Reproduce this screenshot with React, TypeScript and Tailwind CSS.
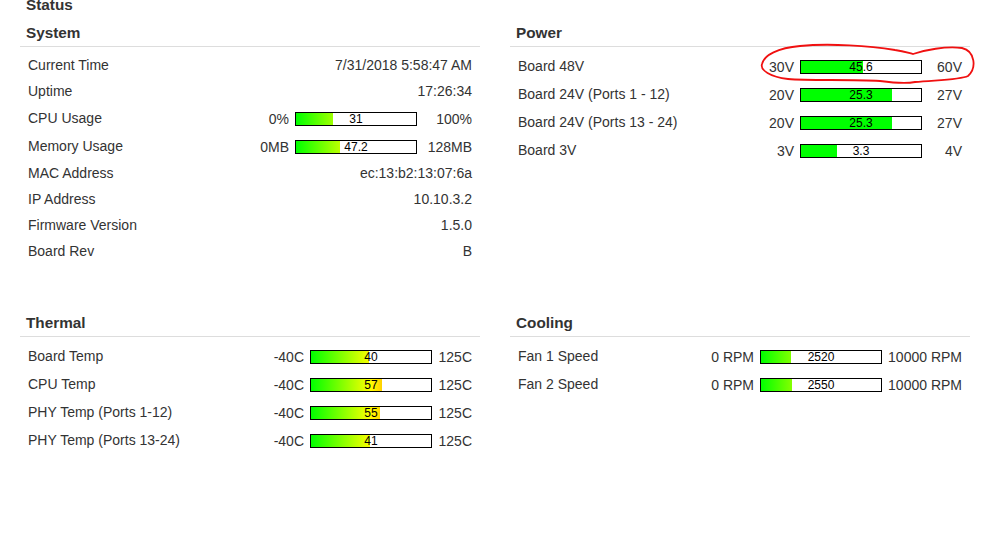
import React from "react";

type Row =
  | { kind: "text"; label: string; value: string }
  | {
      kind: "bar";
      label: string;
      min: string;
      max: string;
      value: string;
      pct: number;
      solid?: boolean;
    };

const GRAD =
  "bg-[linear-gradient(to_right,#00ff00,#ffff00_50%,#ff0000)] bg-[length:120px_100%] bg-no-repeat";

function Bar({ pct, value, solid }: { pct: number; value: string; solid?: boolean }) {
  return (
    <div className="relative ml-[6px] h-[14px] w-[122px] border border-black bg-white">
      <div
        className={`absolute left-0 top-0 h-full ${solid ? "bg-[#00ff00]" : GRAD}`}
        style={{ width: `${pct}%` }}
      />
      <div className="absolute inset-0 flex items-center justify-center text-[12px] leading-[12px] text-black">
        {value}
      </div>
    </div>
  );
}

function Section({
  title,
  rows,
  maxW,
}: {
  title: string;
  rows: Row[];
  maxW: string;
}) {
  return (
    <div>
      <div className="mt-[9px] border-b border-[#dddddd] pb-[3px] pl-[6px] text-[15.3px] font-bold leading-[20px] text-[#333333]">
        {title}
      </div>
      <div className="pt-[5px]">
        {rows.map((r, i) =>
          r.kind === "text" ? (
            <div
              key={i}
              className="flex h-[26px] items-center justify-between px-[8px] text-[14px] leading-[16px] text-[#333333]"
            >
              <span>{r.label}</span>
              <span>{r.value}</span>
            </div>
          ) : (
            <div
              key={i}
              className="flex h-[28px] items-center justify-between px-[8px] text-[14px] leading-[16px] text-[#333333]"
            >
              <span className="-mt-[1px]">{r.label}</span>
              <div className="mt-[2px] flex items-center">
                <span>{r.min}</span>
                <Bar pct={r.pct} value={r.value} solid={r.solid} />
                <span className={`${maxW} text-right`}>{r.max}</span>
              </div>
            </div>
          )
        )}
      </div>
    </div>
  );
}

const system: Row[] = [
  { kind: "text", label: "Current Time", value: "7/31/2018 5:58:47 AM" },
  { kind: "text", label: "Uptime", value: "17:26:34" },
  { kind: "bar", label: "CPU Usage", min: "0%", max: "100%", value: "31", pct: 31 },
  { kind: "bar", label: "Memory Usage", min: "0MB", max: "128MB", value: "47.2", pct: (47.2 / 128) * 100 },
  { kind: "text", label: "MAC Address", value: "ec:13:b2:13:07:6a" },
  { kind: "text", label: "IP Address", value: "10.10.3.2" },
  { kind: "text", label: "Firmware Version", value: "1.5.0" },
  { kind: "text", label: "Board Rev", value: "B" },
];

const power: Row[] = [
  { kind: "bar", label: "Board 48V", min: "30V", max: "60V", value: "45.6", pct: 52, solid: true },
  { kind: "bar", label: "Board 24V (Ports 1 - 12)", min: "20V", max: "27V", value: "25.3", pct: (5.3 / 7) * 100, solid: true },
  { kind: "bar", label: "Board 24V (Ports 13 - 24)", min: "20V", max: "27V", value: "25.3", pct: (5.3 / 7) * 100, solid: true },
  { kind: "bar", label: "Board 3V", min: "3V", max: "4V", value: "3.3", pct: 30, solid: true },
];

const t = (v: number) => ((v + 40) / 165) * 100;
const thermal: Row[] = [
  { kind: "bar", label: "Board Temp", min: "-40C", max: "125C", value: "40", pct: t(40) },
  { kind: "bar", label: "CPU Temp", min: "-40C", max: "125C", value: "57", pct: t(57) },
  { kind: "bar", label: "PHY Temp (Ports 1-12)", min: "-40C", max: "125C", value: "55", pct: t(55) },
  { kind: "bar", label: "PHY Temp (Ports 13-24)", min: "-40C", max: "125C", value: "41", pct: t(41) },
];

const cooling: Row[] = [
  { kind: "bar", label: "Fan 1 Speed", min: "0 RPM", max: "10000 RPM", value: "2520", pct: 25.2 },
  { kind: "bar", label: "Fan 2 Speed", min: "0 RPM", max: "10000 RPM", value: "2550", pct: 25.5 },
];

export default function App() {
  return (
    <div
      className="relative h-[540px] w-[987px] overflow-hidden bg-white"
      style={{ fontFamily: '"Liberation Sans", Arial, sans-serif' }}
    >
      <div className="-mt-[4px] pl-[26px] text-[15.3px] font-bold leading-[18px] text-[#333333]">
        Status
      </div>
      <div className="grid grid-cols-[460px_460px] gap-x-[30px] gap-y-[40px] pl-[20px]">
        <Section title="System" rows={system} maxW="w-[55px]" />
        <Section title="Power" rows={power} maxW="w-[40px]" />
        <Section title="Thermal" rows={thermal} maxW="w-[40px]" />
        <Section title="Cooling" rows={cooling} maxW="w-[80px]" />
      </div>
      <svg
        className="pointer-events-none absolute left-0 top-0"
        width="987"
        height="540"
        viewBox="0 0 987 540"
      >
        <path
          d="M 913 54 C 925 50, 945 46, 962 48 C 975 51, 977 68, 968 76 C 960 80, 935 80, 915 82 C 905 84, 895 83, 880 81 C 850 79, 810 81, 788 79 C 770 77, 760 70, 762 64 C 764 55, 778 48, 800 46 C 830 43, 870 46, 895 50 C 903 51, 909 53, 913 54"
          fill="none"
          stroke="#f01010"
          strokeWidth="1.8"
          strokeLinecap="round"
          strokeLinejoin="round"
        />
      </svg>
    </div>
  );
}
